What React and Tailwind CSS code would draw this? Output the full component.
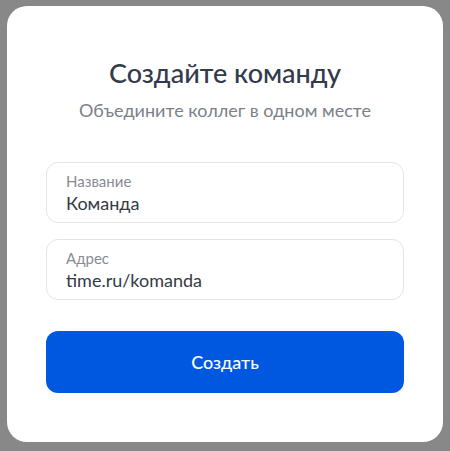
import React from "react";

function Field({ label, value }) {
  return (
    <div className="h-[61px] w-full rounded-[12px] border border-[#e3e4e6] px-[19px] pt-[8px]">
      <div className="text-[15px] leading-[20px] text-[#878b94]">{label}</div>
      <div className="text-[18px] leading-[24px] text-[#343a46]">{value}</div>
    </div>
  );
}

export default function App() {
  return (
    <div
      className="flex h-[451px] w-[450px] items-start bg-[#888888] pl-[7px] pt-[6px]"
      style={{ fontFamily: "Lato, 'Noto Sans', sans-serif" }}
    >
      <div className="flex h-[436px] w-[436px] flex-col items-center rounded-[20px] bg-white px-[39px] pt-[51px]">
        <h1 className="text-[27px] leading-[32px] font-medium text-[#333a4a]">Создайте команду</h1>
        <p className="mt-[9px] text-[18px] leading-[24px] text-[#7b808a]">Объедините коллег в одном месте</p>
        <div className="mt-[40px] flex w-full flex-col gap-[16px]">
          <Field label="Название" value="Команда" />
          <Field label="Адрес" value="time.ru/komanda" />
        </div>
        <button className="mt-[31px] flex h-[62px] w-full items-center justify-center rounded-[12px] bg-[#0058e0] text-[18px] font-medium text-white">
          Создать
        </button>
      </div>
    </div>
  );
}
